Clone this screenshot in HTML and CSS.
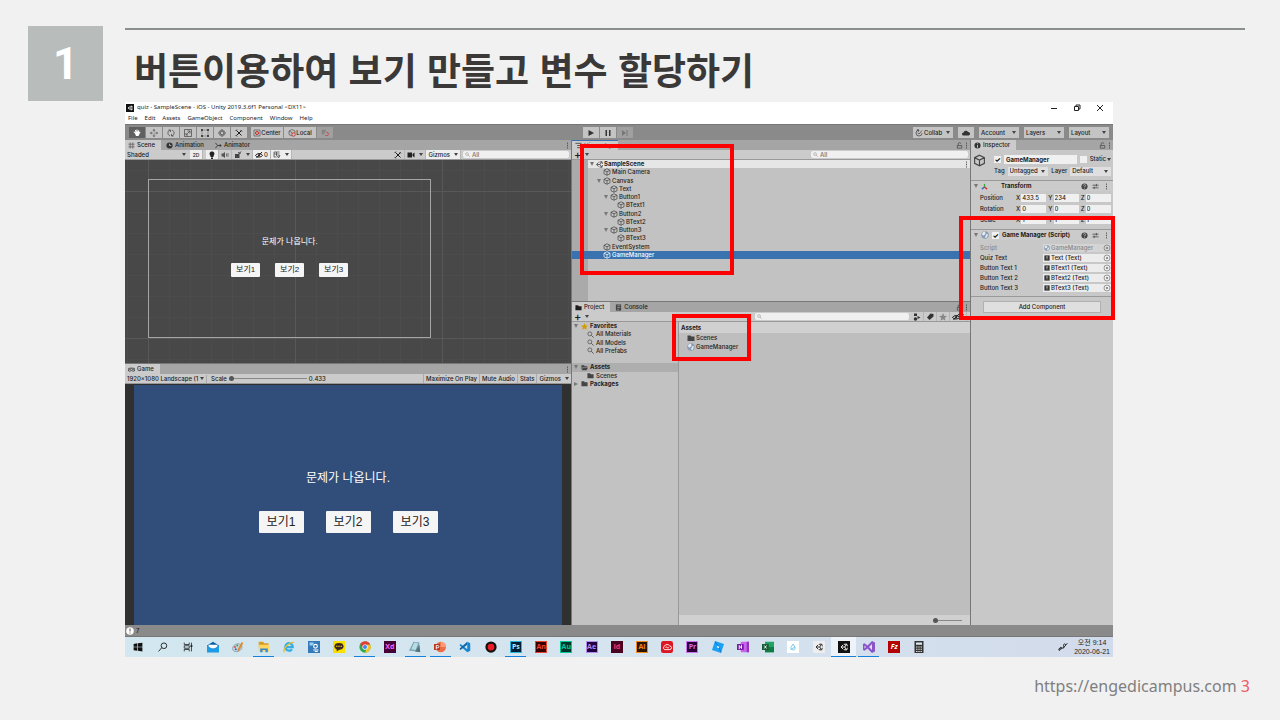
FILE: index.html
```html
<!DOCTYPE html>
<html lang="ko">
<head>
    <meta charset="UTF-8">
    <meta name="viewport" content="width=device-width, initial-scale=1.0">
    <title>버튼이용하여 보기 만들고 변수 할당하기</title>
    <link rel="stylesheet" href="styles.css">
</head>
<body>
    <svg class="defs" aria-hidden="true">
        <symbol id="cube" viewBox="0 0 16 16"><path d="M8 1.5L14 4.5V11.5L8 14.5L2 11.5V4.5ZM2 4.5L8 7.5L14 4.5M8 7.5V14.5" fill="none" stroke="currentColor" stroke-width="1.4"/></symbol>
        <symbol id="unity" viewBox="0 0 16 16"><path d="M6 3L1 8L6 13M8 2.500L13.500 1.500L15 6.500M8 13.500L13.500 14.500L15 9.500M2 8H9L13 2M9 8L13 14" fill="none" stroke="currentColor" stroke-width="1.900"/></symbol>
        <symbol id="folder" viewBox="0 0 16 16"><path d="M1 3H7L8.500 5H15V14H1Z" fill="currentColor"/></symbol>
        <symbol id="folder-open" viewBox="0 0 16 16"><path d="M1 3H7L8.500 5H14V7H4L1 13Z M4.500 8H16L13 14H1.500Z" fill="currentColor"/></symbol>
        <symbol id="search" viewBox="0 0 16 16"><circle cx="6.500" cy="6.500" r="4.500" fill="none" stroke="currentColor" stroke-width="1.500"/><path d="M10 10L15 15" stroke="currentColor" stroke-width="1.800"/></symbol>
        <symbol id="tools" viewBox="0 0 16 16"><path d="M3 3L13 13M13 3L3 13" stroke="currentColor" stroke-width="2"/><path d="M1 4L4 1M11 2L14 5M1 12L4 15" stroke="currentColor" stroke-width="1.500"/></symbol>
        <symbol id="lock" viewBox="0 0 16 16"><path d="M3 8H13V14H3ZM5 8V5A3 3 0 0 1 11 4" fill="none" stroke="currentColor" stroke-width="1.600"/></symbol>
        <symbol id="dots" viewBox="0 0 16 16"><path d="M7 1H9V4H7ZM7 6.500H9V9.500H7ZM7 12H9V15H7Z" fill="currentColor"/></symbol>
        <symbol id="help" viewBox="0 0 16 16"><circle cx="8" cy="8" r="7" fill="currentColor"/><path d="M5.500 6A2.500 2.500 0 1 1 8 8.500V10M8 11.500V13" fill="none" stroke="#ccc" stroke-width="1.500"/></symbol>
        <symbol id="preset" viewBox="0 0 16 16"><path d="M1 5H15M1 11H15M10 2V8M5 8V14" stroke="currentColor" stroke-width="1.700"/></symbol>
        <symbol id="script" viewBox="0 0 16 16"><circle cx="8" cy="8" r="7.500" fill="#8b9db5"/><path d="M3 3L8 1L9 6L5 9L2 7ZM10 7L14 6L12 13L8 14Z" fill="#e5ecf4"/></symbol>
        <symbol id="target" viewBox="0 0 16 16"><circle cx="8" cy="8" r="6" fill="none" stroke="currentColor" stroke-width="1.400"/><circle cx="8" cy="8" r="2" fill="currentColor"/></symbol>
        <symbol id="eye" viewBox="0 0 16 16"><path d="M1 9C4 4 12 4 15 9C12 13 4 13 1 9ZM3 14L14 2" fill="none" stroke="currentColor" stroke-width="2"/><circle cx="8" cy="8.500" r="2" fill="currentColor"/></symbol>
        <symbol id="star" viewBox="0 0 16 16"><path d="M8 0L10.300 5.500L16 6L11.700 10L13 15.500L8 12.500L3 15.500L4.300 10L0 6L5.700 5.500Z" fill="currentColor"/></symbol>
        <symbol id="text" viewBox="0 0 16 16"><path d="M1 1H15V15H1Z" fill="#333"/><path d="M5 5H11M8 5V12" stroke="#ddd" stroke-width="1.500"/></symbol>
    </svg>

    <header class="slide-head">
        <div class="number">1</div>
        <h1 class="title">버튼이용하여 보기 만들고 변수 할당하기</h1>
    </header>

    <main class="window">
        <div class="titlebar">
            <svg class="app" viewBox="0 0 16 16"><path d="M0 0H16V16H0Z" fill="#111"/><path d="M12 4L8 5L4 8L8 11L12 12ZM4 8H9L12 4M9 8L12 12" fill="none" stroke="#fff" stroke-width="1.300"/></svg>
            <span>quiz - SampleScene - iOS - Unity 2019.3.6f1 Personal &lt;DX11&gt;</span>
            <div class="win-buttons">
                <button aria-label="Minimize"><svg viewBox="0 0 8 8"><path d="M1 4.500H7" stroke="#222"/></svg></button>
                <button aria-label="Restore"><svg viewBox="0 0 8 8"><path d="M1.500 2.500H5.500V6.500H1.500ZM3 2V1H7V5H6" fill="none" stroke="#222"/></svg></button>
                <button aria-label="Close"><svg viewBox="0 0 8 8"><path d="M1 1L7 7M7 1L1 7" stroke="#222"/></svg></button>
            </div>
        </div>
        <nav class="menu">
            <a href="#">File</a><a href="#">Edit</a><a href="#">Assets</a><a href="#">GameObject</a><a href="#">Component</a><a href="#">Window</a><a href="#">Help</a>
        </nav>

        <div class="toolbar">
            <div class="tools">
                <button class="on" aria-label="Hand"><svg viewBox="0 0 16 16"><path d="M4 9L1 6L3 5L5 7L4 2L6 2L7 6V1H9V6L11 2L12.500 3L11.500 7L14 5L15 6L11 14H6Z" fill="#fff"/></svg></button>
                <button aria-label="Move"><svg viewBox="0 0 16 16"><path d="M8 0L11 3H5ZM8 16L5 13H11ZM0 8L3 5V11ZM16 8L13 11V5Z" fill="#444"/><path d="M8 3V13M3 8H13" stroke="#444" stroke-dasharray="3 3"/></svg></button>
                <button aria-label="Rotate"><svg viewBox="0 0 16 16"><path d="M6 14C0 11 1 4 6 2M10 2C16 5 15 12 10 14M3 2H7V6M13 14H9V10" fill="none" stroke="#444" stroke-width="1.500"/></svg></button>
                <button aria-label="Scale"><svg viewBox="0 0 16 16"><path d="M1 1H15V15H1ZM4 12L12 4M7 4H12V9M2 10H6V14" fill="none" stroke="#444" stroke-width="1.400"/></svg></button>
                <button aria-label="Rect"><svg viewBox="0 0 16 16"><path d="M2 2H14V14H2Z" fill="none" stroke="#444" stroke-dasharray="3 1"/><path d="M0 0H4V4H0ZM12 0H16V4H12ZM0 12H4V16H0ZM12 12H16V16H12Z" fill="#444"/></svg></button>
                <button aria-label="Transform"><svg viewBox="0 0 16 16"><path d="M5 5H11V11H5ZM8 0V4M8 12V16M0 8H4M12 8H16" fill="none" stroke="#444" stroke-width="1.300"/><circle cx="8" cy="8" r="6" fill="none" stroke="#444"/></svg></button>
                <button aria-label="Custom"><svg><use href="#tools"/></svg></button>
            </div>
            <div class="tools pivot">
                <button><svg viewBox="0 0 16 16"><path d="M2 2H14V14H2Z" fill="none" stroke="#555" stroke-width="1.400"/><circle cx="8" cy="8" r="3" fill="none" stroke="#c22" stroke-width="2"/></svg>Center</button>
                <button><svg viewBox="0 0 16 16"><path d="M8 1L14 4V8M8 14L2 11V4L8 1M2 4L8 7V9" fill="none" stroke="#555" stroke-width="1.400"/><circle cx="11" cy="11" r="3.500" fill="none" stroke="#c22" stroke-width="1.600"/></svg>Local</button>
            </div>
            <div class="tools snap"><button aria-label="Snap"><svg viewBox="0 0 16 16"><path d="M1 4H9M1 8H8M4 1V12M8 1V6" stroke="#666"/><path d="M10 7H12A3 3 0 0 1 12 13H8" fill="none" stroke="#b55" stroke-width="1.800"/></svg></button></div>
            <div class="tools play">
                <button aria-label="Play"><svg viewBox="0 0 16 16"><path d="M3 2L14 8L3 14Z" fill="#333"/></svg></button>
                <button aria-label="Pause"><svg viewBox="0 0 16 16"><path d="M3 2H6V14H3ZM10 2H13V14H10Z" fill="#333"/></svg></button>
                <button class="off" aria-label="Step"><svg viewBox="0 0 16 16"><path d="M2 2L10 8L2 14ZM11 2H13V14H11Z" fill="#777"/></svg></button>
            </div>
            <div class="account">
                <button class="drop"><svg viewBox="0 0 16 16"><path d="M14 8A6 6 0 1 1 8 2M4 1L8 2L6 6M5 8L8 10L14 3" fill="none" stroke="#444" stroke-width="1.500"/></svg>Collab</button>
                <button class="cloud" aria-label="Services"><svg viewBox="0 0 16 16"><path d="M3 13A3 3 0 0 1 3 7A5 5 0 0 1 12 6A3.500 3.500 0 0 1 13 13Z" fill="#333"/></svg></button>
                <button class="drop">Account</button>
                <button class="drop">Layers</button>
                <button class="drop">Layout</button>
            </div>
        </div>

        <div class="editor">
            <div class="col views">
                <section class="panel scene-panel">
                    <div class="tabs">
                        <span class="tab active"><svg viewBox="0 0 16 16"><path d="M5 1V15M11 1V15M1 5H15M1 11H15" stroke="#666" stroke-width="2"/></svg>Scene</span>
                        <span class="tab"><svg viewBox="0 0 16 16"><circle cx="8" cy="8" r="7" fill="#333"/><path d="M8 4V8H12" fill="none" stroke="#bbb" stroke-width="2"/></svg>Animation</span>
                        <span class="tab"><svg viewBox="0 0 16 16"><path d="M1 2L6 8L1 14M6 8H15M12 5V11" fill="none" stroke="#333" stroke-width="2"/></svg>Animator</span>
                        <svg class="last"><use href="#dots"/></svg>
                    </div>
                    <div class="subbar">
                        <span class="pick shaded"><select aria-label="Draw mode"><option>Shaded</option></select></span>
                        <button class="lit two-d">2D</button>
                        <button class="lit bulb" aria-label="Lighting"><svg viewBox="0 0 16 16"><path d="M5 10C1 5 4 1 8 1S15 5 11 10V12H5ZM6 13H10V16H6Z" fill="#222"/></svg></button>
                        <button aria-label="Audio"><svg viewBox="0 0 16 16"><path d="M1 5H4L8 2V14L4 11H1Z" fill="#555"/><path d="M11 5V11M14 4V12" stroke="#555" stroke-width="1.500"/></svg></button>
                        <button class="drop fx" aria-label="Effects"><svg viewBox="0 0 16 16"><path d="M2 6H11V14H2Z" fill="#444"/><path d="M9 7L14 1M8 3L13 5" stroke="#444" stroke-width="2"/></svg></button>
                        <button class="lit hidden-count"><svg><use href="#eye"/></svg>0</button>
                        <button class="lit drop" aria-label="Grid"><svg viewBox="0 0 16 16"><path d="M2 2H13M2 6H13M2 2V12H7M7 2V10M9 10L14 9L11 14Z" fill="none" stroke="#444" stroke-width="1.500"/></svg></button>
                        <div class="sub-right">
                            <button aria-label="Editor tools"><svg><use href="#tools"/></svg></button>
                            <button class="drop" aria-label="Camera"><svg viewBox="0 0 16 16"><path d="M1 3H10V13H1ZM11 6L15 3V13L11 10Z" fill="#222"/></svg></button>
                            <button class="lit drop">Gizmos</button>
                            <label class="search"><svg><use href="#search"/></svg><input type="text" aria-label="Search scene" placeholder="All"></label>
                        </div>
                    </div>
                    <div class="scene">
                        <div class="ui-canvas">
                            <p>문제가 나옵니다.</p>
                            <div class="answers"><button>보기1</button><button>보기2</button><button>보기3</button></div>
                        </div>
                    </div>
                </section>
                <section class="panel game-panel">
                    <div class="tabs">
                        <span class="tab active"><svg viewBox="0 0 16 16"><path d="M4 5H12A3.500 3.500 0 0 1 12 12C10 12 10 10 8 10S6 12 4 12A3.500 3.500 0 0 1 4 5Z" fill="none" stroke="#333" stroke-width="2"/><path d="M3 8H6M10 8H13" stroke="#333" stroke-width="2"/></svg>Game</span>
                        <svg class="last"><use href="#dots"/></svg>
                    </div>
                    <div class="subbar">
                        <span class="pick aspect"><select aria-label="Aspect"><option>1920x1080 Landscape (1</option></select></span>
                        <label class="scale" for="scale">Scale</label>
                        <input type="range" id="scale" min="0" max="100" value="0">
                        <output for="scale">0.433</output>
                        <div class="sub-right ruled">
                            <button>Maximize On Play</button>
                            <button>Mute Audio</button>
                            <button>Stats</button>
                            <button class="drop">Gizmos</button>
                        </div>
                    </div>
                    <div class="game">
                        <div class="ui-canvas">
                            <p>문제가 나옵니다.</p>
                            <div class="answers"><button>보기1</button><button>보기2</button><button>보기3</button></div>
                        </div>
                    </div>
                </section>
            </div>

            <div class="col lists">
                <section class="panel hierarchy">
                    <div class="tabs">
                        <span class="tab active focus"><svg viewBox="0 0 16 16"><path d="M1 3H15M5 8H15M5 13H15" stroke="#444" stroke-width="2"/></svg>Hierarchy</span>
                        <svg class="last"><use href="#lock"/></svg>
                        <svg><use href="#dots"/></svg>
                    </div>
                    <div class="subbar">
                        <button class="drop plus">+</button>
                        <div class="sub-right">
                            <label class="search"><svg><use href="#search"/></svg><input type="text" aria-label="Search hierarchy" placeholder="All"></label>
                        </div>
                    </div>
                    <div class="tree-area">
                        <ul class="tree">
                            <li class="root open"><svg><use href="#unity"/></svg>SampleScene<svg class="row-menu"><use href="#dots"/></svg></li>
                            <li class="d1"><svg><use href="#cube"/></svg>Main Camera</li>
                            <li class="d1 open"><svg><use href="#cube"/></svg>Canvas</li>
                            <li class="d2"><svg><use href="#cube"/></svg>Text</li>
                            <li class="d2 open"><svg><use href="#cube"/></svg>Button1</li>
                            <li class="d3"><svg><use href="#cube"/></svg>BText1</li>
                            <li class="d2 open"><svg><use href="#cube"/></svg>Button2</li>
                            <li class="d3"><svg><use href="#cube"/></svg>BText2</li>
                            <li class="d2 open"><svg><use href="#cube"/></svg>Button3</li>
                            <li class="d3"><svg><use href="#cube"/></svg>BText3</li>
                            <li class="d1"><svg><use href="#cube"/></svg>EventSystem</li>
                            <li class="d1 selected"><svg><use href="#cube"/></svg>GameManager</li>
                        </ul>
                    </div>
                    <div class="mark mark-tree"></div>
                </section>
                <section class="panel project">
                    <div class="tabs">
                        <span class="tab active"><svg><use href="#folder"/></svg>Project</span>
                        <span class="tab"><svg viewBox="0 0 16 16"><path d="M2 1H14V15H2Z" fill="#444"/><path d="M5 4H12M5 8H12M5 12H9" stroke="#aaa" stroke-width="1.500"/></svg>Console</span>
                        <svg class="last"><use href="#lock"/></svg>
                        <svg><use href="#dots"/></svg>
                    </div>
                    <div class="subbar">
                        <button class="drop plus">+</button>
                        <div class="sub-right">
                            <label class="search"><svg><use href="#search"/></svg><input type="text" aria-label="Search project"></label>
                            <button aria-label="By type"><svg viewBox="0 0 16 16"><path d="M2 1H8V6H2ZM9 6L15 9L9 12Z" fill="#333"/><circle cx="5" cy="12" r="3.500" fill="#333"/></svg></button>
                            <button aria-label="By label"><svg viewBox="0 0 16 16"><path d="M9 1L15 2V7L7 14L2 9Z" fill="#333"/></svg></button>
                            <button aria-label="Favorite" class="grey"><svg><use href="#star"/></svg></button>
                            <button aria-label="Hidden"><svg><use href="#eye"/></svg>7</button>
                        </div>
                    </div>
                    <div class="browser">
                        <ul class="tree folders">
                            <li class="bold open"><svg class="gold"><use href="#star"/></svg>Favorites</li>
                            <li class="sub"><svg><use href="#search"/></svg>All Materials</li>
                            <li class="sub"><svg><use href="#search"/></svg>All Models</li>
                            <li class="sub"><svg><use href="#search"/></svg>All Prefabs</li>
                            <li></li>
                            <li class="bold open current"><svg><use href="#folder-open"/></svg>Assets</li>
                            <li class="sub"><svg><use href="#folder"/></svg>Scenes</li>
                            <li class="bold closed"><svg><use href="#folder"/></svg>Packages</li>
                        </ul>
                        <div class="assets">
                            <h2>Assets</h2>
                            <ul class="tree files">
                                <li><svg><use href="#folder"/></svg>Scenes</li>
                                <li><svg><use href="#script"/></svg>GameManager</li>
                            </ul>
                            <div class="zoom-bar"><input type="range" aria-label="Icon size" min="0" max="100" value="0"></div>
                            <div class="mark mark-assets"></div>
                        </div>
                    </div>
                </section>
            </div>

            <section class="col panel inspector">
                <div class="tabs">
                    <span class="tab active"><svg viewBox="0 0 16 16"><circle cx="8" cy="8" r="7" fill="#333"/><path d="M8 3V5M8 7V13" stroke="#ddd" stroke-width="2"/></svg>Inspector</span>
                    <svg class="last"><use href="#lock"/></svg>
                    <svg><use href="#dots"/></svg>
                </div>
                <div class="object-head">
                    <svg class="big"><use href="#cube"/></svg>
                    <div class="object-rows">
                        <div class="row">
                            <input type="checkbox" aria-label="Active" checked>
                            <input type="text" class="name" aria-label="Name" value="GameManager">
                            <input type="checkbox" id="static"><label class="static" for="static">Static</label>
                        </div>
                        <div class="row">
                            <label for="tag">Tag</label><span class="pick"><select id="tag"><option>Untagged</option></select></span>
                            <label for="layer">Layer</label><span class="pick"><select id="layer"><option>Default</option></select></span>
                        </div>
                    </div>
                </div>
                <div class="comp-head transform-head">
                    <i></i><svg viewBox="0 0 16 16"><path d="M8 9V2" stroke="#3a3" stroke-width="3"/><path d="M8 9L2 14" stroke="#36c" stroke-width="3"/><path d="M8 9L14 14" stroke="#c33" stroke-width="3"/></svg>
                    <h2>Transform</h2>
                    <svg><use href="#help"/></svg><svg><use href="#preset"/></svg><svg><use href="#dots"/></svg>
                </div>
                <div class="vectors">
                    <div class="vector"><span>Position</span><label>X<input type="text" value="433.5"></label><label>Y<input type="text" value="234"></label><label>Z<input type="text" value="0"></label></div>
                    <div class="vector"><span>Rotation</span><label>X<input type="text" value="0"></label><label>Y<input type="text" value="0"></label><label>Z<input type="text" value="0"></label></div>
                    <div class="vector"><span>Scale</span><label>X<input type="text" value="1"></label><label>Y<input type="text" value="1"></label><label>Z<input type="text" value="1"></label></div>
                </div>
                <div class="comp-head">
                    <i></i><svg class="script"><use href="#script"/></svg><input type="checkbox" aria-label="Enabled" checked>
                    <h2>Game Manager (Script)</h2>
                    <svg><use href="#help"/></svg><svg><use href="#preset"/></svg><svg><use href="#dots"/></svg>
                </div>
                <div class="fields">
                    <div class="field disabled"><span>Script</span><button><svg><use href="#script"/></svg>GameManager<svg class="pin"><use href="#target"/></svg></button></div>
                    <div class="field"><span>Quiz Text</span><button><svg><use href="#text"/></svg>Text (Text)<svg class="pin"><use href="#target"/></svg></button></div>
                    <div class="field"><span>Button Text 1</span><button><svg><use href="#text"/></svg>BText1 (Text)<svg class="pin"><use href="#target"/></svg></button></div>
                    <div class="field"><span>Button Text 2</span><button><svg><use href="#text"/></svg>BText2 (Text)<svg class="pin"><use href="#target"/></svg></button></div>
                    <div class="field"><span>Button Text 3</span><button><svg><use href="#text"/></svg>BText3 (Text)<svg class="pin"><use href="#target"/></svg></button></div>
                </div>
                <button class="add">Add Component</button>
                <div class="mark mark-script"></div>
            </section>
        </div>

        <div class="status"><svg viewBox="0 0 16 16"><circle cx="8" cy="8" r="7.500" fill="#fff"/><path d="M8 3V9M8 11V13" stroke="#555" stroke-width="2"/></svg>7</div>

        <footer class="taskbar">
            <ul class="apps">
                <li><svg viewBox="0 0 16 16"><path d="M1 3L7 2V7.500H1ZM8 2L15 1V7.500H8ZM1 8.500H7V14L1 13ZM8 8.500H15V15L8 14Z" fill="#111"/></svg></li>
                <li><svg viewBox="0 0 16 16"><circle cx="9.500" cy="6" r="4.500" fill="none" stroke="#222" stroke-width="1.500"/><path d="M6 9L1 15" stroke="#222" stroke-width="1.500"/></svg></li>
                <li><svg viewBox="0 0 16 16"><path d="M2 1V4H10V1M2 15V12H10V15M2 6H10V10H2ZM13.500 1V15" fill="none" stroke="#222" stroke-width="1.300"/><path d="M12 5H15V8H12Z" fill="#222"/></svg></li>
                <li><svg viewBox="0 0 16 16"><path d="M0 6L8 1L16 6V15H0Z" fill="#0a5fa8"/><path d="M2 5H14V10H2Z" fill="#fff"/><path d="M0 6L8 11L16 6V15H0Z" fill="#1c9be6"/></svg></li>
                <li><svg viewBox="0 0 16 16"><ellipse cx="7" cy="9" rx="6.500" ry="5" fill="#c6d9e3" stroke="#8798a4" transform="rotate(-25 7 9)"/><circle cx="4" cy="8" r="1.300" fill="#d44"/><circle cx="7" cy="6" r="1.300" fill="#3a3"/><circle cx="5" cy="11" r="1.300" fill="#36c"/><path d="M8 13L14 2" stroke="#df8a2e" stroke-width="2.500"/></svg></li>
                <li class="running"><svg viewBox="0 0 16 16"><path d="M1 1H7L8 3H14V8H1Z" fill="#d99a1c"/><path d="M1 5H15V14H1Z" fill="#ffd561"/><path d="M3 10H13V15H10V12H6V15H3Z" fill="#3488cc"/></svg></li>
                <li><svg viewBox="0 0 16 16"><path d="M12 11A5 5 0 1 1 13 8H4" fill="none" stroke="#35aee8" stroke-width="3"/><path d="M2 15C-2 12 9 0 15 2" fill="none" stroke="#f1bd28" stroke-width="1.600"/></svg></li>
                <li><svg viewBox="0 0 16 16"><path d="M0 0H16V16H0Z" fill="#3579b8"/><path d="M2 2H8L6 6H2Z" fill="#9fd0ef"/><circle cx="10" cy="7" r="2.500" fill="none" stroke="#fff" stroke-width="1.500"/><path d="M7 12H14M9 14H13" stroke="#fff" stroke-width="1.500"/></svg></li>
                <li><svg viewBox="0 0 16 16"><path d="M0 0H16V16H0Z" fill="#f9e000"/><ellipse cx="8" cy="7" rx="6" ry="4.500" fill="#3a2521"/><path d="M5 10V14L9 11Z" fill="#3a2521"/><path d="M4 7H12" stroke="#f9e000" stroke-width="1.500" stroke-dasharray="2 1"/></svg></li>
                <li class="running"><svg viewBox="0 0 16 16"><circle cx="8" cy="8" r="7.500" fill="#2da94f"/><path d="M1.500 4A7.500 7.500 0 0 1 15 5H8L5 9Z" fill="#e34133"/><path d="M15 5A7.500 7.500 0 0 1 8 15.500L11 8L8 5Z" fill="#fcc31f"/><circle cx="8" cy="8" r="3.500" fill="#fff"/><circle cx="8" cy="8" r="2.700" fill="#4285f4"/></svg></li>
                <li><b class="tile xd">Xd</b></li>
                <li class="running"><svg viewBox="0 0 16 16"><path d="M6 1L14 2L12 14L0 13Z" fill="#75a8b5"/><path d="M7 2L12 3L9 12L3 11Z" fill="#b9dbe3"/><path d="M14 5L15 15L8 14Z" fill="#56747e"/></svg></li>
                <li class="running"><svg viewBox="0 0 16 16"><circle cx="9" cy="8" r="7" fill="#ed6c47"/><path d="M9 1A7 7 0 0 1 16 8H9Z" fill="#ff9a78"/><path d="M0 4H8V12H0Z" fill="#b83b1d"/><path d="M3 11V6H5A1.500 1.500 0 0 1 5 9H3" fill="none" stroke="#fff" stroke-width="1.200"/></svg></li>
                <li><svg viewBox="0 0 16 16"><path d="M11 1L15 3V13L11 15L1 6V5L2 4L11 11Z" fill="#1686d0"/><path d="M11 1L1 10V11L2 12L11 5Z" fill="#0b66aa"/></svg></li>
                <li><svg viewBox="0 0 16 16"><circle cx="8" cy="8" r="7.500" fill="#111"/><circle cx="8" cy="8" r="4.500" fill="#ed1c24"/></svg></li>
                <li class="running"><b class="tile ps">Ps</b></li>
                <li><b class="tile an">An</b></li>
                <li><b class="tile au">Au</b></li>
                <li><b class="tile ae">Ae</b></li>
                <li><b class="tile id">Id</b></li>
                <li><b class="tile ai">Ai</b></li>
                <li><svg viewBox="0 0 16 16"><rect width="16" height="16" rx="3" fill="#dc1622"/><path d="M5 11.500A2.500 2.500 0 0 1 4.500 7A4 4 0 0 1 11.500 6.500A2.500 2.500 0 0 1 11.500 11.500ZM6 8.500C8 7 8 10 10.500 9" fill="none" stroke="#fff" stroke-width="1.200"/></svg></li>
                <li><b class="tile pr">Pr</b></li>
                <li><svg viewBox="0 0 16 16"><path d="M4 0L16 4L12 16L0 12Z" fill="#1aa0f4"/><path d="M4 1L9 8L12 15" stroke="#0b6fc0" fill="none"/><path d="M7 7L9 9" stroke="#fff" stroke-width="2"/></svg></li>
                <li><svg viewBox="0 0 16 16"><path d="M5 1H16V15H5Z" fill="#ca64ea"/><path d="M13 1H16V15H13Z" fill="#9332bf"/><path d="M0 4H9V12H0Z" fill="#7719aa"/><path d="M3 11V6L6 10V5" fill="none" stroke="#fff" stroke-width="1.200"/></svg></li>
                <li><svg viewBox="0 0 16 16"><path d="M4 1H16V15H4Z" fill="#21a366"/><path d="M10 8H16V15H4V8Z" fill="#107c41"/><path d="M0 4H9V12H0Z" fill="#185c37"/><path d="M3 6L6 10M6 6L3 10" stroke="#fff" stroke-width="1.200"/></svg></li>
                <li><svg viewBox="0 0 16 16"><path d="M0 0H16V16H0Z" fill="#fff"/><path d="M8 4L11 9A3 3 0 0 1 5 9ZM5 11L11 8" fill="none" stroke="#6ec8ed" stroke-width="1.200"/></svg></li>
                <li><svg viewBox="0 0 16 16"><path d="M0 0H16V16H0Z" fill="#eee"/><path d="M7 5L4 8L7 11M8 4.500L11.500 4L12.500 7M8 11.500L11.500 12L12.500 9M5 8H9L11 4.500M9 8L11 11.500" fill="none" stroke="#222" stroke-width="1.200"/></svg></li>
                <li class="running front"><svg viewBox="0 0 16 16"><path d="M0 0H16V16H0Z" fill="#111"/><path d="M7 5L4 8L7 11M8 4.500L11.500 4L12.500 7M8 11.500L11.500 12L12.500 9M5 8H9L11 4.500M9 8L11 11.500" fill="none" stroke="#fff" stroke-width="1.200"/></svg></li>
                <li class="running"><svg viewBox="0 0 16 16"><path d="M12 0L16 2V14L12 16L6 10L2 13L0 12V4L2 3L6 6Z" fill="#8a55c8"/><path d="M12 4V12L8 8ZM2 6V10L4 8Z" fill="#e1dff0"/></svg></li>
                <li><b class="tile fz">Fz</b></li>
                <li><svg viewBox="0 0 16 16"><path d="M2 0H14V16H2Z" fill="#333"/><path d="M4 2H12V5H4Z" fill="#dfe8f0"/><path d="M4 8H12M4 11H12M4 14H12" stroke="#ddd" stroke-width="1.500" stroke-dasharray="2 1"/></svg></li>
            </ul>
            <svg class="pen" viewBox="0 0 16 16"><path d="M1 12C4 7 7 8 5 11S1 15 2 11C5 8 11 12 9 7C8 3 12 1 12 5M8 10L15 2" fill="none" stroke="#222" stroke-width="1.500"/></svg>
            <div class="clock"><span>오전 9:14</span><span>2020-06-21</span></div>
        </footer>
    </main>

    <div class="slide-foot"><a href="https://engedicampus.com">https://engedicampus.com</a> <span>3</span></div>
</body>
</html>
```
FILE: styles.css
```css
*{
    box-sizing: border-box;
}
body{
    margin: 0;
    padding: 26px 30px 0 28px;
    background-color: #f1f1f1;
    font-family: "Noto Sans CJK KR", sans-serif;
}
button, input, select{
    font: inherit;
    color: inherit;
    margin: 0;
    padding: 0;
    border: 0;
    border-radius: 0;
    background: none;
}
h1, h2, p, ul{
    margin: 0;
    padding: 0;
}
ul{
    list-style: none;
}
a{
    color: inherit;
    text-decoration: none;
}
svg{
    width: 8px;
    height: 8px;
    flex: none;
}
.defs{
    position: absolute;
    width: 0;
    height: 0;
}

/* slide */
.slide-head{
    display: flex;
    gap: 22px;
    padding-right: 5px;
}
.number{
    width: 75px;
    height: 75px;
    flex: none;
    background-color: #b8bcbb;
    color: white;
    font: bold 44px/77px Roboto, sans-serif;
    text-align: center;
}
.title{
    flex: 1;
    margin-top: 2px;
    padding: 12px 9px 0;
    border-top: 2px solid #8b908e;
    color: #3b3838;
    font-size: 37px;
    line-height: 54px;
    font-weight: bold;
    white-space: nowrap;
}
.slide-foot{
    margin-top: 17px;
    text-align: right;
    font: 16px/24px "Noto Sans", sans-serif;
    color: #7f7f7f;
}
.slide-foot span{
    color: #ef5a64;
}

/* editor window */
.window{
    margin: 1px 137px 0 97px;
    background-color: #8a8a8a;
    color: #1c1c1c;
    font: 500 6px/8px Inter, sans-serif;
    white-space: nowrap;
}
.titlebar, .menu{
    display: flex;
    align-items: center;
    height: 11px;
    background-color: white;
    font: 6px/9px "Noto Sans", "Noto Sans CJK KR", sans-serif;
}
.titlebar{
    padding-left: 1px;
    gap: 3px;
}
.win-buttons{
    display: flex;
    gap: 15px;
    margin-left: auto;
    padding-right: 9px;
}
.win-buttons button{
    display: flex;
}
.menu{
    gap: 7px;
    padding-left: 3px;
}
.toolbar{
    position: relative;
    display: flex;
    align-items: center;
    height: 16px;
    padding: 0 4px;
    border-top: 1px solid #777;
}
.toolbar button{
    display: flex;
    align-items: center;
    justify-content: center;
    height: 11px;
    background-color: #c4c4c4;
}
.tools{
    display: flex;
    gap: 1px;
}
.tools button{
    width: 16px;
}
.tools .on{
    background-color: #606060;
}
.pivot{
    margin-left: 4px;
}
.pivot button{
    width: 32px;
    gap: 0;
}
.snap button{
    background-color: #a0a0a0;
    margin-left: 1px;
}
.play{
    position: absolute;
    left: 458px;
}
.tools .off{
    background-color: #a0a0a0;
}
.account{
    display: flex;
    gap: 5px;
    margin-left: auto;
}
.account .drop{
    width: 40px;
    justify-content: flex-start;
    gap: 1px;
    padding-left: 2px;
}
.account .cloud{
    width: 16px;
}
.drop::after, .pick::after, .static::after{
    content: "";
    border: 2px solid transparent;
    border-top: 3px solid #444;
    border-bottom: 0;
    margin: 0 3px 0 auto;
    flex: none;
}

.editor{
    display: grid;
    grid-template-columns: 446fr 398fr 142fr;
    column-gap: 1px;
    background-color: #777;
}
.col{
    display: flex;
    flex-direction: column;
    min-width: 0;
    gap: 1px;
}
.panel{
    position: relative;
    background-color: #c2c2c2;
}
.tabs, .subbar{
    display: flex;
    align-items: center;
    height: 10px;
}
.tabs{
    background-color: #a5a5a5;
}
.tabs > svg{
    width: 7px;
    height: 7px;
    color: #444;
}
.tabs .last{
    margin-left: auto;
}
.tab{
    display: flex;
    align-items: center;
    gap: 2px;
    height: 10px;
    padding: 0 6px 0 3px;
}
.tab + .tab{
    padding-left: 5px;
}
.tab svg{
    width: 7px;
    height: 7px;
}
.tab.active{
    background-color: #cbcbcb;
}
.focus{
    border-top: 1px solid #3a72b0;
    color: #666;
}
.subbar{
    background-color: #cbcbcb;
    border-bottom: 1px solid #999;
}
.subbar button{
    display: flex;
    align-items: center;
    justify-content: center;
    height: 9px;
    min-width: 13px;
    padding: 0 2px;
    gap: 1px;
    border-right: 1px solid #b5b5b5;
}
.subbar .lit{
    background-color: #eee;
}
.subbar .drop::after{
    margin: 0 0 0 3px;
}
.subbar .plus{
    border: 0;
    font-size: 11px;
}
.subbar .bulb{
    margin-left: 3px;
}
.sub-right{
    display: flex;
    align-items: center;
    margin-left: auto;
}
.pick{
    display: flex;
    align-items: center;
}
.pick select{
    appearance: none;
    flex: 1;
    min-width: 0;
    height: 8px;
    padding-left: 2px;
}
.shaded{
    width: 64px;
    margin-right: 1px;
}
.two-d{
    font-size: 5px;
}
.search{
    display: flex;
    align-items: center;
    width: 106px;
    height: 7px;
    margin: 0 2px;
    background-color: #f0f0f0;
    border-radius: 2px;
    color: #888;
}
.search svg{
    width: 5px;
    height: 5px;
    margin: 0 2px;
}
.search input{
    width: 80%;
    height: 7px;
}
.hierarchy .search{
    width: 157px;
}
.project .search{
    width: 154px;
}
.project .sub-right{
    padding-right: 3px;
}

/* scene and game views */
.scene{
    height: 203px;
    padding: 19px 0 0 23px;
    background-color: #484848;
    background-image:
        linear-gradient(90deg, #585858 1px, transparent 1px),
        linear-gradient(#585858 1px, transparent 1px),
        linear-gradient(90deg, #4c4c4c 1px, transparent 1px),
        linear-gradient(#4c4c4c 1px, transparent 1px);
    background-size: 147px 147px, 147px 147px, 21px 21px, 21px 21px;
    background-position: 23px 31px;
}
.ui-canvas{
    display: flex;
    flex-direction: column;
    align-items: center;
    font-family: "Liberation Sans", "Noto Sans CJK KR", sans-serif;
    font-weight: normal;
}
.scene .ui-canvas{
    width: 67%;
    height: 159px;
    padding-top: 56px;
    border: 1px solid #a5a5a5;
    color: white;
    font-size: 8px;
    line-height: 12px;
}
.answers{
    display: flex;
    color: #222;
}
.answers button{
    background-color: #f5f5f5;
    border-radius: 1px;
}
.scene .answers{
    gap: 15px;
    margin-top: 15px;
}
.scene .answers button{
    width: 29px;
    height: 14px;
}
.game{
    height: 241px;
    padding: 1px 9px 0;
    background-color: #303030;
}
.game .ui-canvas{
    height: 240px;
    padding-top: 84px;
    background-color: #314d79;
    color: white;
    font-size: 12px;
    line-height: 18px;
}
.game .answers{
    gap: 22px;
    margin-top: 24px;
}
.game .answers button{
    width: 45px;
    height: 22px;
}
.aspect{
    width: 82px;
    border-right: 1px solid #aaa;
}
.aspect::after{
    margin: 0 2px 0 0;
}
.scale{
    margin: 0 2px 0 4px;
}
input[type=range]{
    appearance: none;
    width: 78px;
    height: 6px;
    background: linear-gradient(#888, #888) center / 100% 1px no-repeat;
}
input[type=range]::-webkit-slider-thumb{
    appearance: none;
    width: 5px;
    height: 5px;
    border-radius: 50%;
    background-color: #555;
}
.subbar output{
    margin-left: 2px;
}
.ruled button{
    border-right: 0;
    border-left: 1px solid #aaa;
}

/* hierarchy */
.hierarchy{
    height: 161px;
}
.tree-area{
    height: 141px;
    background: linear-gradient(90deg, #aaa 16px, #c2c2c2 16px);
}
.tree{
    display: grid;
    grid-auto-rows: 1fr;
}
.tree-area .tree{
    height: 99px;
}
.tree li{
    display: flex;
    align-items: center;
    gap: 1px;
    color: #222;
}
.tree svg{
    color: #444;
}
.tree .open::before, .closed::before, .comp-head i{
    content: "";
    flex: none;
    margin-right: 1px;
    border: 2px solid transparent;
    border-top: 4px solid #777;
    border-bottom: 0;
}
.tree .closed::before{
    border: 2px solid transparent;
    border-left: 4px solid #777;
    border-right: 0;
}
.tree .root{
    margin-left: 16px;
    padding-left: 2px;
    background-color: #e6e6e6;
    font-weight: bold;
}
.tree .root svg{
    width: 7px;
    height: 7px;
}
.tree .row-menu{
    margin-left: auto;
}
.d1{
    padding-left: 31px;
}
.d2{
    padding-left: 38px;
}
.d3{
    padding-left: 45px;
}
.d1.open{
    padding-left: 25px;
}
.d2.open{
    padding-left: 32px;
}
.tree .selected, .tree .selected svg{
    background-color: #3a72b0;
    color: white;
}

/* project */
.project{
    flex: 1;
    display: flex;
    flex-direction: column;
}
.project .grey{
    color: #888;
}
.browser{
    flex: 1;
    display: grid;
    grid-template-columns: 106px 1fr;
}
.folders{
    height: 66px;
}
.folders li{
    padding-left: 2px;
    gap: 2px;
}
.folders .sub{
    padding-left: 15px;
}
.folders svg{
    width: 7px;
    height: 7px;
}
.tree .bold{
    font-weight: bold;
}
.folders .gold{
    color: #d49a00;
}
.current{
    background-color: #aeaeae;
}
.assets{
    position: relative;
    display: flex;
    flex-direction: column;
    background-color: #bebebe;
    border-left: 1px solid #999;
}
.assets h2{
    height: 11px;
    padding-left: 2px;
    background-color: #d0d0d0;
    font-size: 6px;
    line-height: 11px;
}
.files{
    height: 18px;
    padding: 1px 0 0 8px;
}
.zoom-bar{
    display: flex;
    align-items: center;
    justify-content: flex-end;
    height: 10px;
    margin-top: auto;
    padding-right: 8px;
    background-color: #d0d0d0;
}
.zoom-bar input[type=range]{
    width: 29px;
}

/* inspector */
.inspector{
    gap: 0;
    background-color: #c8c8c8;
}
.object-head{
    display: flex;
    gap: 8px;
    height: 30px;
    padding: 3px 2px 0 2px;
}
.object-head .big{
    width: 13px;
    height: 13px;
    margin-top: 1px;
    color: #444;
}
.object-rows{
    flex: 1;
    min-width: 0;
}
.row{
    display: flex;
    align-items: center;
    gap: 3px;
    height: 12px;
}
.row .name{
    flex: 1;
    min-width: 0;
    height: 9px;
    padding-left: 2px;
    background-color: #f0f0f0;
    font-weight: bold;
}
.row .pick{
    flex: 1;
    min-width: 0;
    height: 9px;
    background-color: #dfdfdf;
}
.static{
    display: flex;
    align-items: center;
    gap: 1px;
}
.static::after{
    margin: 0;
}
input[type=checkbox]{
    appearance: none;
    width: 7px;
    height: 7px;
    flex: none;
    background-color: #f0f0f0;
    font-size: 7px;
    line-height: 7px;
    text-align: center;
}
input[type=checkbox]:checked::after{
    content: "✓";
    color: black;
    font-weight: bold;
}
.comp-head{
    display: flex;
    align-items: center;
    gap: 3px;
    height: 11px;
    padding: 0 2px 0 3px;
    border-top: 1px solid #999;
    background-color: #cbcbcb;
}
.comp-head i{
    margin: 0;
}
.comp-head h2{
    flex: 1;
    font-size: 6px;
    line-height: 8px;
}
.transform-head h2{
    padding-left: 9px;
}
.comp-head svg{
    width: 7px;
    height: 7px;
    margin-right: 1px;
    color: #444;
}
.comp-head .script{
    width: 8px;
    height: 8px;
    margin: 0;
}
.vectors{
    height: 38px;
    padding: 1px 2px 0 9px;
}
.vector{
    display: grid;
    grid-template-columns: 34px 1fr 1fr 1fr;
    align-items: center;
    column-gap: 2px;
    height: 11px;
}
.vector label{
    display: flex;
    gap: 1px;
}
.vector input{
    flex: 1;
    width: 0;
    height: 8px;
    padding-left: 1px;
    background-color: #f0f0f0;
}
.fields{
    padding: 3px 2px 3px 9px;
    border-bottom: 1px solid #999;
}
.field{
    display: grid;
    grid-template-columns: 63px 1fr;
    align-items: center;
    height: 10px;
}
.field button{
    display: flex;
    align-items: center;
    gap: 1px;
    height: 8px;
    background-color: #ececec;
}
.field svg{
    width: 6px;
    height: 6px;
    margin-left: 1px;
}
.field .pin{
    margin-left: auto;
    width: 8px;
    height: 8px;
    color: #777;
}
.disabled{
    color: #888;
}
.disabled button{
    background-color: #d4d4d4;
}
.add{
    height: 12px;
    margin: 4px 12px 0;
    background-color: #dfdfdf;
    border: 1px solid #b0b0b0;
}

/* red frames around the parts being explained */
.mark{
    position: absolute;
    z-index: 1;
    border: 4px solid #ff0000;
}
.mark-tree{
    left: 8px;
    top: 4px;
    width: 154px;
    height: 131px;
}
.mark-assets{
    left: -7px;
    top: -8px;
    width: 79px;
    height: 47px;
}
.mark-script{
    left: -12px;
    right: -2px;
    top: 76px;
    height: 104px;
}

.status{
    display: flex;
    align-items: center;
    gap: 2px;
    height: 11px;
    padding-left: 1px;
}
.taskbar{
    display: flex;
    align-items: center;
    height: 21px;
    border-top: 1px solid #777;
    background: linear-gradient(90deg, #d2e7ef, #d5e4ef 50%, #d2dbeb);
}
.apps{
    display: flex;
    width: 817px;
    width: calc(82% - 3px);
    height: 20px;
}
.apps li{
    display: flex;
    align-items: center;
    justify-content: center;
    flex: 1;
    height: 20px;
}
.apps svg{
    width: 12px;
    height: 12px;
}
.apps li:nth-child(-n+3) svg{
    width: 10px;
    height: 10px;
}
.running{
    background: linear-gradient(#1481dc, #1481dc) center bottom / 21px 1px no-repeat;
}
.front{
    background-color: #edf3f8;
    background-size: 25px 1px;
}
.tile{
    width: 12px;
    height: 12px;
    border: 1px solid;
    font: bold 7px/10px "Open Sans", sans-serif;
    text-align: center;
}
.xd{ background-color: #470137; color: #ff61f6; border-color: #470137; }
.ps{ background-color: #001e36; color: #b7eeff; border-color: #27b7d5; }
.an{ background-color: #370000; color: #e5452d; }
.au{ background-color: #00352c; color: #00c99a; }
.ae{ background-color: #21003f; color: #b58aec; }
.id{ background-color: #49021f; color: #ff3366; border-color: #49021f; }
.ai{ background-color: #2b1500; color: #f08a1c; }
.pr{ background-color: #2a0038; color: #cf72ee; }
.fz{ background-color: #b30000; color: white; border-color: #b30000; font-style: italic; }
.pen{
    width: 10px;
    height: 10px;
    margin-left: auto;
    margin-right: 6px;
}
.clock{
    display: flex;
    flex-direction: column;
    align-items: center;
    padding-right: 3px;
    font: 7px/9px "Liberation Sans", "Noto Sans CJK KR", sans-serif;
}
```
